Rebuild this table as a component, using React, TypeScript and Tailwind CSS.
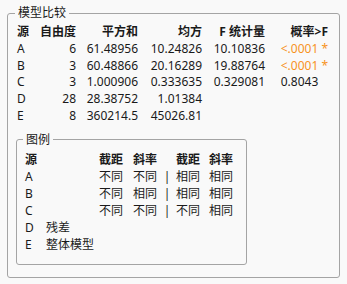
const font = { fontFamily: '"Noto Sans", "Noto Sans CJK SC", sans-serif' };

const rows = [
  { src: "A", df: "6", ss: "61.48956", ms: "10.24826", f: "10.10836", p: "<.0001", sig: true },
  { src: "B", df: "3", ss: "60.48866", ms: "20.16289", f: "19.88764", p: "<.0001", sig: true },
  { src: "C", df: "3", ss: "1.000906", ms: "0.333635", f: "0.329081", p: "0.8043", sig: false },
  { src: "D", df: "28", ss: "28.38752", ms: "1.01384", f: "", p: "", sig: false },
  { src: "E", df: "8", ss: "360214.5", ms: "45026.81", f: "", p: "", sig: false },
];

const legend = [
  { src: "A", desc: "", cells: ["不同", "不同", "相同", "相同"] },
  { src: "B", desc: "", cells: ["不同", "相同", "相同", "相同"] },
  { src: "C", desc: "", cells: ["不同", "不同", "不同", "相同"] },
  { src: "D", desc: "残差", cells: null },
  { src: "E", desc: "整体模型", cells: null },
];

function Outer() {
  return (
    <fieldset className="ml-[7px] mt-[4px] w-[333px] rounded-[3px] border border-[#a4a4a4] pb-[12px] pl-[9px]">
      <legend className="ml-[-2px] px-[3px] text-[12px] leading-[16px] text-[#1a1a1a]">模型比较</legend>
      <div className="grid grid-cols-[22px_37px_62px_64px_63px_63px] whitespace-nowrap pt-[3px] text-[12px] leading-[16.8px] text-[#1a1a1a]">
        <div className="font-bold">源</div>
        <div className="flex justify-end font-bold">自由度</div>
        <div className="flex justify-end font-bold">平方和</div>
        <div className="flex justify-end font-bold">均方</div>
        <div className="flex justify-end font-bold">F 统计量</div>
        <div className="flex justify-end font-bold">概率&gt;F</div>
        {rows.map((r) => (
          <div key={r.src} className="contents">
            <div>{r.src}</div>
            <div className="text-right">{r.df}</div>
            <div className="text-right">{r.ss}</div>
            <div className="text-right">{r.ms}</div>
            <div className="text-right">{r.f}</div>
            <div className={r.sig ? "text-right text-[#f7931e]" : "text-right"}>
              {r.p}
              {r.p && <span className={r.sig ? "" : "invisible"}> *</span>}
            </div>
          </div>
        ))}
      </div>
      <Legend />
    </fieldset>
  );
}

function Legend() {
  return (
    <fieldset className="-ml-[1px] mt-[7px] w-[231px] rounded-[3px] border border-[#a4a4a4] pb-[11px] pl-[8px]">
      <legend className="ml-[-2px] px-[3px] text-[12px] leading-[16px] text-[#1a1a1a]">图例</legend>
      <div className="grid grid-cols-[21px_53px_34px_28px_12px_36px_auto] whitespace-nowrap pt-[3px] text-[12px] leading-[17px] text-[#1a1a1a]">
        <div className="font-bold">源</div>
        <div></div>
        <div className="font-bold">截距</div>
        <div className="font-bold">斜率</div>
        <div></div>
        <div className="pl-[3px] font-bold">截距</div>
        <div className="font-bold">斜率</div>
        {legend.map((r) =>
          r.cells ? (
            <div key={r.src} className="contents">
              <div>{r.src}</div>
              <div></div>
              <div>{r.cells[0]}</div>
              <div>{r.cells[1]}</div>
              <div className="text-center">|</div>
              <div className="pl-[3px]">{r.cells[2]}</div>
              <div>{r.cells[3]}</div>
            </div>
          ) : (
            <div key={r.src} className="contents">
              <div>{r.src}</div>
              <div className="col-span-6">{r.desc}</div>
            </div>
          )
        )}
      </div>
    </fieldset>
  );
}

export default function App() {
  return (
    <div className="h-[284px] w-[347px] overflow-hidden bg-[#f9f9f9] pt-px" style={font}>
      <Outer />
    </div>
  );
}
